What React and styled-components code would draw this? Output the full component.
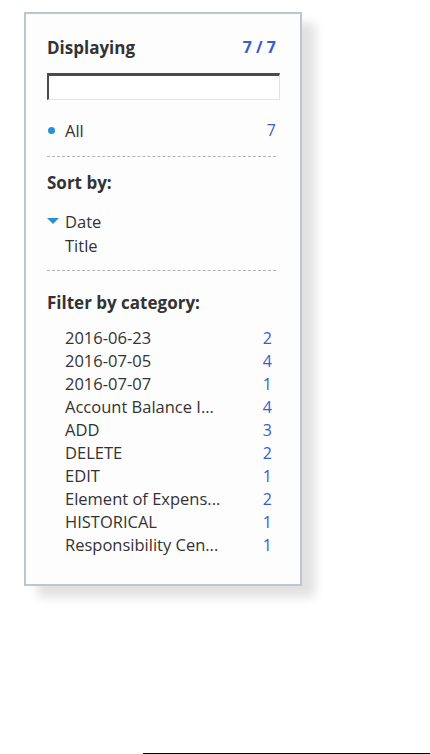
import React from "react";
import styled, { createGlobalStyle } from "styled-components";

const Global = createGlobalStyle`
  body {
    margin: 0;
    background: #fff;
    font-family: "Open Sans", "Noto Sans", sans-serif;
    color: #333;
  }
`;

const Page = styled.div`
  width: 430px;
  height: 754px;
  display: flex;
  flex-direction: column;
  overflow: hidden;
`;

const Panel = styled.aside`
  box-sizing: border-box;
  margin: 12px 0 0 24px;
  width: 278px;
  height: 574px;
  background: #fdfdfd;
  border: 2px solid #bcc6d0;
  box-shadow: 13px 11px 10px rgba(0, 0, 0, 0.12);
  padding: 21px 24px 0 21px;
`;

const HeadRow = styled.div`
  display: flex;
  justify-content: space-between;
  align-items: center;
  height: 24px;
  margin-top: ${(p) => p.top || 0}px;
`;

const Heading = styled.h3`
  margin: 0;
  font-size: 17px;
  font-weight: 700;
  color: #333;
`;

const Count = styled.span`
  font-size: 16px;
  font-weight: ${(p) => (p.bold ? 700 : 400)};
  color: #3a5ccc;
`;

const Search = styled.input`
  box-sizing: border-box;
  display: block;
  width: 233px;
  height: 27px;
  margin-top: 14px;
  border-style: solid;
  border-width: 3px 1px 1px 2px;
  border-color: #4a4a4a #e6e2dc #e6e2dc #4a4a4a;
  background: #fff;
  outline: none;
`;

const Item = styled.div`
  display: flex;
  justify-content: space-between;
  align-items: center;
  height: ${(p) => p.h || 23}px;
  font-size: 16.5px;
  padding-left: ${(p) => p.indent || 0}px;
  padding-right: ${(p) => p.right || 0}px;
  color: #333;
  white-space: nowrap;
`;

const Label = styled.span`
  display: flex;
  align-items: center;
`;

const Dot = styled.span`
  width: 7px;
  height: 7px;
  border-radius: 50%;
  background: #2b8fd6;
  margin: 0 10px 0 1px;
`;

const Caret = styled.span`
  width: 0;
  height: 0;
  border-left: 6px solid transparent;
  border-right: 6px solid transparent;
  border-top: 6px solid #2b8fd6;
  margin: 0 6px 0 0;
`;

const Divider = styled.div`
  border-top: 1px dashed #b4b4b4;
  margin-top: ${(p) => p.top || 0}px;
`;

const List = styled.div`
  margin-top: ${(p) => p.top || 0}px;
  display: flex;
  flex-direction: column;
`;

const Rule = styled.div`
  margin: 167px 0 0 143px;
  width: 287px;
  height: 1px;
  background: #000;
`;

const categories = [
  ["2016-06-23", 2],
  ["2016-07-05", 4],
  ["2016-07-07", 1],
  ["Account Balance I...", 4],
  ["ADD", 3],
  ["DELETE", 2],
  ["EDIT", 1],
  ["Element of Expens...", 2],
  ["HISTORICAL", 1],
  ["Responsibility Cen...", 1],
];

export default function App() {
  return (
    <Page>
      <Global />
      <Panel>
        <HeadRow>
          <Heading>Displaying</Heading>
          <Count bold>7 / 7</Count>
        </HeadRow>
        <Search />
        <List top={18}>
          <Item h={24}>
            <Label>
              <Dot />
              All
            </Label>
            <Count>7</Count>
          </Item>
        </List>
        <Divider top={14} />
        <HeadRow top={13}>
          <Heading>Sort by:</Heading>
        </HeadRow>
        <List top={15}>
          <Item h={24}>
            <Label>
              <Caret />
              Date
            </Label>
          </Item>
          <Item h={24} indent={18}>
            Title
          </Item>
        </List>
        <Divider top={13} />
        <HeadRow top={19}>
          <Heading>Filter by category:</Heading>
        </HeadRow>
        <List top={12}>
          {categories.map(([name, n]) => (
            <Item key={name} indent={18} right={4}>
              {name}
              <Count>{n}</Count>
            </Item>
          ))}
        </List>
      </Panel>
      <Rule />
    </Page>
  );
}
